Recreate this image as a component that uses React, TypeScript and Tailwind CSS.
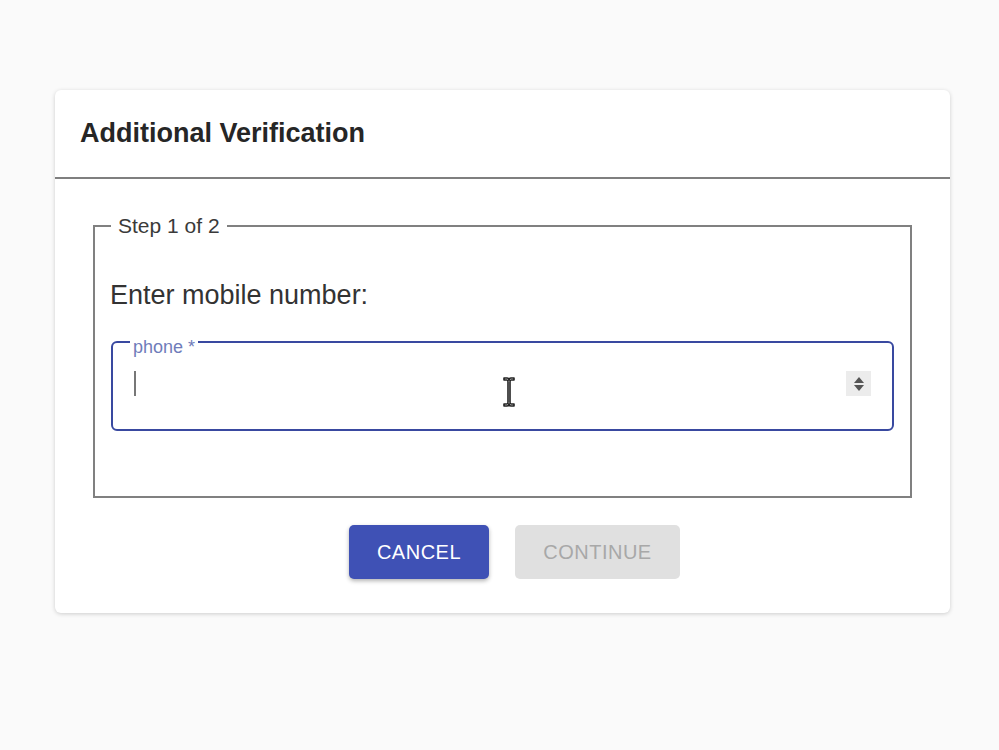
import React from 'react';

export default function App() {
  return (
    <div className="min-h-[750px] w-full bg-[#fafafa] pt-[90px] pl-[55px]" style={{ fontFamily: '"Liberation Sans", Arial, sans-serif' }}>
      <div className="w-[895px] bg-white rounded-[6px] shadow-[0_1px_4px_rgba(0,0,0,0.18)]">
        {/* Header */}
        <div className="h-[89px] flex items-center pl-[25px] border-b-2 border-[#7f7f7f]">
          <h2 className="text-[27px] font-bold text-[#262626] leading-none">Additional Verification</h2>
        </div>

        {/* Body */}
        <div className="px-[38px] pt-[35px] pb-[34px]">
          <fieldset className="border-2 border-[#808080] px-[16px] pb-[65px]">
            <legend className="px-[7px] text-[21px] leading-[24px] text-[#3a3a3a]">Step 1 of 2</legend>
            <p className="mt-[42px] text-[27px] leading-[31px] text-[#333] -ml-px">Enter mobile number:</p>

            <div className="relative mt-[30px] h-[90px] border-2 border-[#3949a0] rounded-[6px]">
              <span className="absolute top-[-6px] left-[17px] px-[3px] bg-white text-[18px] leading-[20px] text-[#6f7cba]">phone *</span>
              <div className="absolute left-[21px] top-[28px] w-[2px] h-[25px] bg-[#777]" />
              <div className="absolute right-[21px] top-[28px] w-[25px] h-[25px] bg-[#ececec] flex flex-col items-center justify-center gap-[2px]">
                <svg width="10" height="6" viewBox="0 0 10 6"><path d="M0 6 L5 0 L10 6 Z" fill="#555" /></svg>
                <svg width="10" height="6" viewBox="0 0 10 6"><path d="M0 0 L5 6 L10 0 Z" fill="#555" /></svg>
              </div>
              {/* mouse text cursor */}
              <svg className="absolute left-[389px] top-[33px]" width="14" height="32" viewBox="0 0 14 32">
                <path d="M2 2 H5 Q7 2 7 4 Q7 2 9 2 H12 V4 H9 Q8 4 8 6 V26 Q8 28 9 28 H12 V30 H9 Q7 30 7 28 Q7 30 5 30 H2 V28 H5 Q6 28 6 26 V6 Q6 4 5 4 H2 Z" fill="#fff" stroke="#222" strokeWidth="1.6" strokeLinejoin="round" />
              </svg>
            </div>
          </fieldset>

          <div className="mt-[27px] flex justify-center gap-[26px] pl-[24px]">
            <button className="w-[140px] h-[54px] rounded-[5px] bg-[#3f51b5] text-white text-[20px] tracking-[0.5px] shadow-[0_2px_4px_rgba(0,0,0,0.3)]">
              CANCEL
            </button>
            <button className="w-[165px] h-[54px] rounded-[5px] bg-[#e0e0e0] text-[#a8a8a8] text-[20px] tracking-[0.5px]" disabled>
              CONTINUE
            </button>
          </div>
        </div>
      </div>
    </div>
  );
}
